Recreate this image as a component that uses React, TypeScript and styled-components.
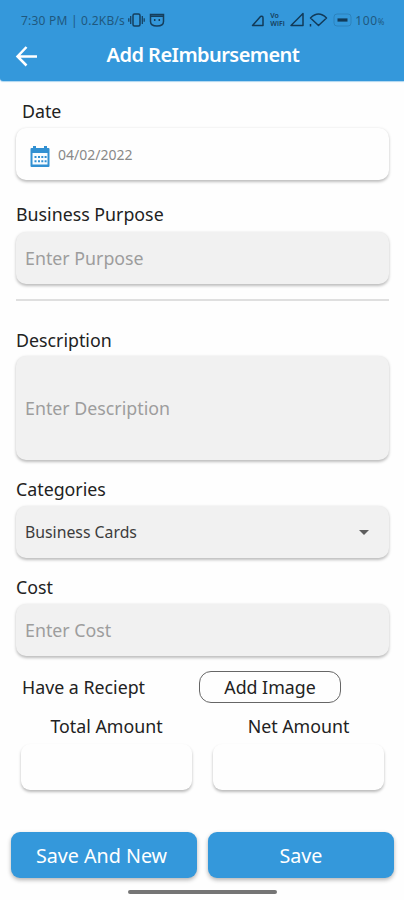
import React from "react";
import styled, { createGlobalStyle } from "styled-components";

const BLUE = "#3498db";

const GlobalStyle = createGlobalStyle`
  *, *::before, *::after { box-sizing: border-box; }
  body { margin: 0; background: #fefefe; font-family: "Noto Sans", sans-serif; color: #222; }
  button, input { font-family: inherit; }
`;

const Screen = styled.div`
  width: 404px;
  height: 900px;
  display: flex;
  flex-direction: column;
  overflow: hidden;
  background: #fefefe;
`;

const Header = styled.header`
  height: 81px;
  flex: none;
  background: ${BLUE};
  border-bottom-left-radius: 3px;
  box-shadow: 0 1px 1px rgba(52, 152, 219, 0.4);
`;

const StatusBar = styled.div`
  height: 40px;
  padding: 0 19px 0 21px;
  display: flex;
  align-items: center;
  color: #20587f;
  font-size: 12px;
`;

const StatusText = styled.span<{ $spacing?: number }>`
  letter-spacing: ${(p) => p.$spacing ?? 0}px;
  white-space: nowrap;
  small { font-size: 8px; }
`;

const StatusIcons = styled.svg<{ $left?: string }>`
  display: block;
  flex: none;
  margin-left: ${(p) => p.$left ?? "0"};
`;

const VoWifi = styled.span`
  display: flex;
  flex-direction: column;
  align-items: flex-start;
  width: 17px;
  margin-left: 5px;
  font-size: 7px;
  font-weight: 600;
  line-height: 8px;
  color: #153e5c;
`;

const TitleBar = styled.div`
  height: 32px;
  display: grid;
  grid-template-columns: 54px 1fr 52px;
  align-items: center;
`;

const BackButton = styled.button`
  border: 0;
  padding: 0 0 0 15px;
  background: none;
  height: 32px;
  svg { display: block; }
`;

const Title = styled.h1`
  margin: -3px 0 0;
  text-align: center;
  color: #fff;
  font-size: 20px;
  font-weight: 600;
  line-height: 30px;
  letter-spacing: -0.55px;
  white-space: nowrap;
`;

const Form = styled.main`
  flex: 1;
  display: flex;
  flex-direction: column;
  padding: 18px 15px 0 16px;
`;

const Label = styled.label<{ $indent?: number }>`
  display: block;
  height: 24px;
  line-height: 24px;
  padding-left: ${(p) => p.$indent ?? 0}px;
  font-size: 17.8px;
  white-space: nowrap;
`;

const Field = styled.div<{ $height?: number; $gap: number; $white?: boolean }>`
  height: ${(p) => p.$height ?? 52}px;
  flex: none;
  margin-top: ${(p) => p.$gap}px;
  padding: 0 9px;
  display: flex;
  align-items: center;
  border-radius: 10px;
  background: ${(p) => (p.$white ? "#fefefe" : "#f1f1f1")};
  box-shadow: 0 1.5px 3px rgba(0, 0, 0, 0.26);
`;

const DateField = styled(Field)`
  padding: 5px 14px 0;
`;

const Input = styled.input`
  width: 100%;
  border: 0;
  padding: 0 0 1px;
  outline: 0;
  background: transparent;
  font-size: 17.8px;
  color: #333;
  &::placeholder { color: #9d9d9d; opacity: 1; }
`;

const DateValue = styled.span`
  margin: -4px 0 0 8px;
  font-size: 14px;
  color: #898989;
`;

const SelectValue = styled.span`
  flex: 1;
  font-size: 15.8px;
  color: #3c3c3c;
`;

const Caret = styled.span`
  margin-right: 11px;
  border: 5px solid transparent;
  border-top-color: #5e5e5e;
  border-bottom: 0;
`;

const Divider = styled.hr`
  width: 100%;
  height: 2px;
  flex: none;
  border: 0;
  margin: 15px 0 27px;
  background: #dfdfdf;
`;

const Group = styled.section<{ $gap: number }>`
  margin-top: ${(p) => p.$gap}px;
`;

const ReceiptRow = styled.div`
  display: flex;
  align-items: center;
  margin-top: 15px;
  height: 32px;
`;

const ReceiptLabel = styled(Label)`
  width: 183px;
`;

const AddImage = styled.button`
  width: 142px;
  height: 32px;
  padding: 0;
  border: 1px solid #666;
  border-radius: 12px;
  background: #fefefe;
  color: #222;
  font-size: 17.8px;
`;

const Amounts = styled.div`
  display: grid;
  grid-template-columns: 171px 171px;
  column-gap: 21px;
  margin: 11px 0 0 5px;
`;

const AmountLabel = styled(Label)`
  text-align: center;
`;

const AmountBox = styled.div`
  height: 46px;
  margin-top: 6px;
  border-radius: 9px;
  background: #fefefe;
  box-shadow: 0 2px 3px rgba(0, 0, 0, 0.27);
`;

const Footer = styled.footer`
  height: 68px;
  flex: none;
  padding: 0 10px 0 11px;
`;

const Actions = styled.div`
  display: grid;
  grid-template-columns: 186px 186px;
  column-gap: 11px;
`;

const Action = styled.button<{ $shift?: number }>`
  height: 46px;
  padding: 1px ${(p) => p.$shift ?? 0}px 0 0;
  border: 0;
  border-radius: 9px;
  background: ${BLUE};
  color: #fff;
  font-size: 19.7px;
  box-shadow: 0 2px 4px rgba(0, 0, 0, 0.3);
`;

const HomeBar = styled.div`
  width: 149px;
  height: 4px;
  margin: 12px auto 0 117px;
  border-radius: 2px;
  background: #757575;
`;

function CalendarIcon() {
  return (
    <svg width="20" height="22" viewBox="0 0 20 22">
      <path fill="#3190d2" d="M3 2V0h3v2h8V0h3v2h1.5q1 0 1 1v17q0 1-1 1h-17q-1 0-1-1V3q0-1 1-1z" />
      <path fill="#f8fcff" d="M2.500 7h15v11.500h-15z" />
      <g fill="#3190d2">
        <path d="M4.500 10h2v2h-2zM8 10h2v2H8zM11.300 10h2v2h-2zM14.600 10h2v2h-2zM4.500 14.200h2v2h-2zM8 14.200h2v2H8zM11.300 14.200h2v2h-2zM14.600 14.200h2v2h-2z" />
      </g>
    </svg>
  );
}

export default function App() {
  return (
    <>
      <GlobalStyle />
      <Screen>
        <Header>
          <StatusBar>
            <StatusText $spacing={0.22}>7:30 PM | 0.2KB/s</StatusText>
            <StatusIcons $left="3px" width="38" height="16" viewBox="0 0 38 16" fill="none" stroke="#153e5c" strokeWidth="1.5">
              <rect x="5" y="2" width="7" height="12" rx="1.5" />
              <path d="M2.700 4v8M.8 6.300v3.400M14.300 4v8M16.200 6.300v3.400" strokeWidth="1.2" />
              <path d="M22.500 2.500h13v7q0 4.500-6.500 4.500t-6.500-4.500zM22.500 4.200h13" />
              <path d="M26.700 7v2M31.300 7v2" />
            </StatusIcons>
            <StatusIcons $left="auto" width="14" height="16" viewBox="0 0 14 16" fill="none" stroke="#123a58" strokeWidth="1.5" strokeLinejoin="round">
              <path d="M1.500 13.500L9.500 4.500Q12 3.500 12 6v7.500z" />
            </StatusIcons>
            <VoWifi>
              <span>Vo</span>
              <span>WiFi</span>
            </VoWifi>
            <StatusIcons $left="2px" width="66" height="18" viewBox="0 0 66 18" fill="none" stroke="#123a58" strokeWidth="1.5" strokeLinejoin="round">
              <path d="M2 14.500L14 2.500v12z" />
              <path d="M21.500 7Q29.500-1 37.500 7L29.500 14.500z" />
              <path d="M21.500 13v2.500" />
              <rect x="45" y="3" width="17" height="12" rx="3" strokeWidth="1" opacity=".22" />
              <path d="M48.500 9h10" strokeWidth="3.2" />
            </StatusIcons>
            <StatusText $spacing={0.6}>
              100<small>%</small>
            </StatusText>
          </StatusBar>
          <TitleBar>
            <BackButton aria-label="Back">
              <svg width="24" height="24" viewBox="0 0 24 24" fill="none" stroke="#fff" strokeWidth="2.5">
                <path d="M22 12.500H3M11.500 3L2.500 12.500l9 9" />
              </svg>
            </BackButton>
            <Title>Add ReImbursement</Title>
          </TitleBar>
        </Header>

        <Form>
          <Label $indent={6}>Date</Label>
          <DateField $gap={5} $white>
            <CalendarIcon />
            <DateValue>04/02/2022</DateValue>
          </DateField>

          <Group $gap={22}>
            <Label htmlFor="purpose">Business Purpose</Label>
            <Field $gap={6}>
              <Input id="purpose" placeholder="Enter Purpose" />
            </Field>
          </Group>
          <Divider />

          <Label htmlFor="description">Description</Label>
          <Field $gap={4} $height={104}>
            <Input id="description" placeholder="Enter Description" />
          </Field>

          <Group $gap={17}>
            <Label>Categories</Label>
            <Field $gap={5}>
              <SelectValue>Business Cards</SelectValue>
              <Caret />
            </Field>
          </Group>

          <Group $gap={17}>
            <Label htmlFor="cost">Cost</Label>
            <Field $gap={5}>
              <Input id="cost" placeholder="Enter Cost" />
            </Field>
          </Group>

          <ReceiptRow>
            <ReceiptLabel $indent={6}>Have a Reciept</ReceiptLabel>
            <AddImage>Add Image</AddImage>
          </ReceiptRow>

          <Amounts>
            <div>
              <AmountLabel>Total Amount</AmountLabel>
              <AmountBox />
            </div>
            <div>
              <AmountLabel>Net Amount</AmountLabel>
              <AmountBox />
            </div>
          </Amounts>
        </Form>

        <Footer>
          <Actions>
            <Action $shift={5}>Save And New</Action>
            <Action>Save</Action>
          </Actions>
          <HomeBar />
        </Footer>
      </Screen>
    </>
  );
}
